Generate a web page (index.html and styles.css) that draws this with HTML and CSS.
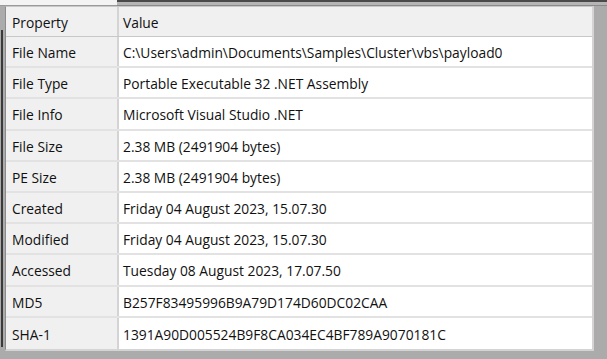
FILE: index.html
```html
<!DOCTYPE html>
<html>
<head>
<meta charset="utf-8">
<link rel="stylesheet" href="styles.css">
</head>
<body>
<div class="screen">
  <div class="topstrip">
    <div class="top-light"></div>
    <div class="top-dark"></div>
  </div>
  <div class="main">
    <div class="leftedge"><div class="leftline"></div></div>
    <div class="table">
      <div class="row head"><div class="c k">Property</div><div class="c v">Value</div></div>
      <div class="row"><div class="c k">File Name</div><div class="c v">C:\Users\admin\Documents\Samples\Cluster\vbs\payload0</div></div>
      <div class="row"><div class="c k">File Type</div><div class="c v">Portable Executable 32 .NET Assembly</div></div>
      <div class="row"><div class="c k">File Info</div><div class="c v">Microsoft Visual Studio .NET</div></div>
      <div class="row"><div class="c k">File Size</div><div class="c v">2.38 MB (2491904 bytes)</div></div>
      <div class="row"><div class="c k">PE Size</div><div class="c v">2.38 MB (2491904 bytes)</div></div>
      <div class="row"><div class="c k">Created</div><div class="c v">Friday 04 August 2023, 15.07.30</div></div>
      <div class="row"><div class="c k">Modified</div><div class="c v">Friday 04 August 2023, 15.07.30</div></div>
      <div class="row"><div class="c k">Accessed</div><div class="c v">Tuesday 08 August 2023, 17.07.50</div></div>
      <div class="row"><div class="c k">MD5</div><div class="c v">B257F83495996B9A79D174D60DC02CAA</div></div>
      <div class="row"><div class="c k">SHA-1</div><div class="c v">1391A90D005524B9F8CA034EC4BF789A9070181C</div></div>
    </div>
  </div>
</div>
</body>
</html>
```
FILE: styles.css
```css
* { box-sizing: border-box; }
html, body { margin: 0; padding: 0; }
body {
  width: 607px;
  height: 359px;
  overflow: hidden;
  background: #ababab;
  font-family: "Open Sans", "Noto Sans", sans-serif;
  font-size: 13.8px;
  color: #111111;
}
.screen { display: flex; flex-direction: column; height: 359px; }
.topstrip { display: flex; height: 6px; }
.top-light { width: 117px; background: #f3f3f3; border-bottom: 1px solid #9a9a9a; }
.top-dark { flex: 1; border-top: 2px solid #4a4a4a; background: #b5b5b5; border-bottom: 1px solid #8a8a8a; }
.main { display: flex; flex: 1; }
.leftedge { width: 5px; padding-left: 1px; padding-top: 24px; padding-bottom: 12px; display: flex; }
.leftline { width: 2px; background: #3a3a3a; }
.table {
  width: 589px;
  background: #ffffff;
  border-top: 1px solid #c8c8c8;
  border-left: 1px solid #8c8c8c;
  border-right: 2px solid #d4d4d4;
  border-bottom: 2px solid #d4d4d4;
  display: flex;
  flex-direction: column;
  align-self: flex-start;
}
.row { display: flex; height: 31.2px; border-bottom: 2px solid #e2e2e2; }
.row:last-child { border-bottom: none; }
.row.head { height: 30px; background: #f0f0f0; border-bottom: 1px solid #c8c8c8; }
.row.head .v { background: #f0f0f0; }
.c { display: flex; align-items: center; white-space: nowrap; padding-top: 2px; }
.k { width: 113px; padding-left: 6px; background: #f0f0f0; border-right: 2px solid #d4d4d4; }
.v { flex: 1; padding-left: 4px; background: #ffffff; }
```
